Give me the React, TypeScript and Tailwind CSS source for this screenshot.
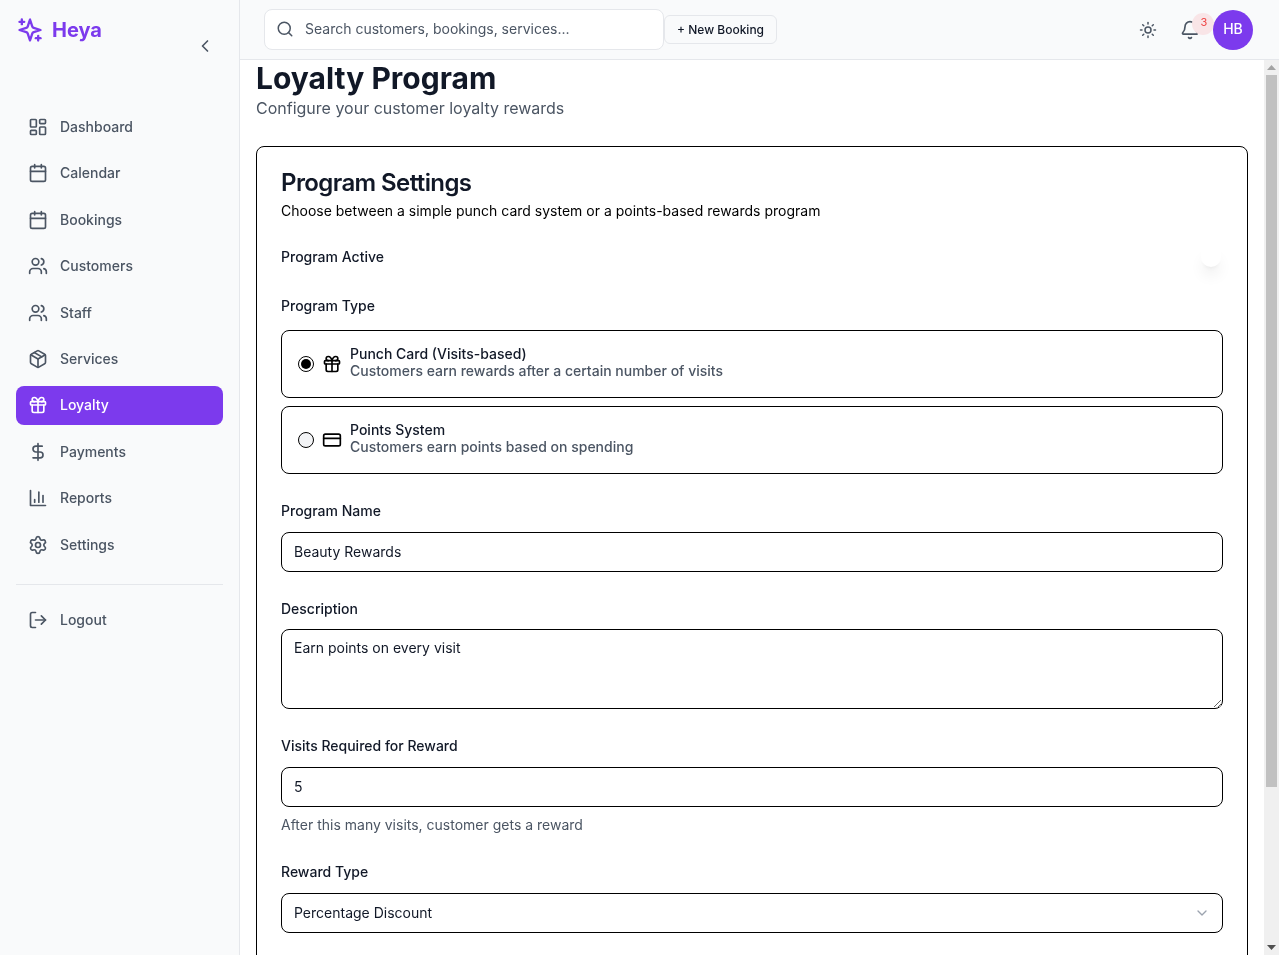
import React from "react";
import { ChevronLeft, LayoutDashboard, Calendar, Users, Package, Gift, DollarSign, Settings, LogOut, Search, Sun, Bell, CreditCard, ChevronDown } from "lucide-react";

function ReportsIcon({ size = 20, strokeWidth = 2 }: { size?: number; strokeWidth?: number }) {
  return (
    <svg width={size} height={size} viewBox="0 0 24 24" fill="none" stroke="currentColor" strokeWidth={strokeWidth} strokeLinecap="round" strokeLinejoin="round">
      <path d="M3 3v18h18" />
      <path d="M18 17V9" />
      <path d="M13 17V5" />
      <path d="M8 17v-3" />
    </svg>
  );
}

const nav = [
  { label: "Dashboard", icon: LayoutDashboard },
  { label: "Calendar", icon: Calendar },
  { label: "Bookings", icon: Calendar },
  { label: "Customers", icon: Users },
  { label: "Staff", icon: Users },
  { label: "Services", icon: Package },
  { label: "Loyalty", icon: Gift, active: true },
  { label: "Payments", icon: DollarSign },
  { label: "Reports", icon: ReportsIcon },
  { label: "Settings", icon: Settings },
];

function LogoMark() {
  return (
    <svg width="28" height="28" viewBox="0 0 24 24" fill="none" stroke="currentColor" strokeWidth="2" strokeLinecap="round" strokeLinejoin="round" className="shrink-0">
      <path d="m12 3-1.912 5.813a2 2 0 0 1-1.275 1.275L3 12l5.813 1.912a2 2 0 0 1 1.275 1.275L12 21l1.912-5.813a2 2 0 0 1 1.275-1.275L21 12l-5.813-1.912a2 2 0 0 1-1.275-1.275L12 3Z" />
      <path d="M5 3v4" />
      <path d="M19 17v4" />
      <path d="M3 5h4" />
      <path d="M17 19h4" />
    </svg>
  );
}

function NavItem({ label, icon: Icon, active }: { label: string; icon: React.ElementType; active?: boolean }) {
  return (
    <a className={`flex items-center gap-3 h-[38.4px] px-[12px] rounded-lg text-sm font-medium ${active ? "bg-[#7c3aed] text-white" : "text-[#4b5563]"}`}>
      <span className="w-5 h-5 flex items-center justify-center shrink-0">
        <Icon size={20} strokeWidth={2} />
      </span>
      <span>{label}</span>
    </a>
  );
}

function Label({ children }: { children: React.ReactNode }) {
  return <label className="block text-sm font-medium text-[#111827] leading-[22.4px]">{children}</label>;
}

function Field({ value }: { value: string }) {
  return (
    <input
      readOnly
      value={value}
      className="block w-full h-10 px-[12px] rounded-lg border border-black bg-white text-sm text-[#111827] outline-none"
    />
  );
}

function RadioCard({ checked, icon: Icon, title, desc }: { checked?: boolean; icon: React.ElementType; title: string; desc: string }) {
  return (
    <div className="flex items-center h-[68px] rounded-lg border border-black px-4 gap-2">
      <span className={`w-4 h-4 rounded-full border border-black flex items-center justify-center shrink-0 ${checked ? "bg-white" : "bg-[#f3f4f6]"}`}>
        {checked && <span className="w-[10px] h-[10px] rounded-full bg-black" />}
      </span>
      <Icon size={20} strokeWidth={2} className="text-black shrink-0" />
      <div className="mb-1 font-medium">
        <div className="text-sm text-[#111827] leading-[17px]">{title}</div>
        <div className="text-sm text-[#4b5563] leading-[17px]">{desc}</div>
      </div>
    </div>
  );
}

function FakeScrollbar() {
  return (
    <div className="w-[15px] shrink-0 h-full bg-[#f0f0f0] flex flex-col items-center">
      <div className="h-[15px] w-full shrink-0 flex items-center justify-center">
        <svg width="9" height="5" viewBox="0 0 9 5"><path d="M4.5 0 9 5H0Z" fill="#a3a3a3" /></svg>
      </div>
      <div className="w-[11px] h-[712px] bg-[#c1c1c1] shrink-0" />
      <div className="mt-auto h-[15px] w-full shrink-0 flex items-center justify-center">
        <svg width="9" height="5" viewBox="0 0 9 5"><path d="M0 0H9L4.5 5Z" fill="#505050" /></svg>
      </div>
    </div>
  );
}

export default function App() {
  return (
    <div className="flex h-screen w-full overflow-hidden leading-[1.6] will-change-transform" style={{ fontFamily: "Inter, sans-serif" }}>
      <aside className="w-[240px] shrink-0 h-full bg-[#f9fafb] border-r border-[#e5e7eb] flex flex-col px-4">
        <div className="h-[60px] relative flex items-start pt-[16px]">
          <div className="flex items-center gap-2 text-[#7c3aed]">
            <LogoMark />
            <span className="text-xl font-bold leading-[28px]">Heya</span>
          </div>
          <ChevronLeft size={20} className="absolute left-[179px] top-[36px] text-[#4b5563]" />
        </div>
        <nav className="flex flex-col gap-2 mt-[47.8px]">
          {nav.map((n) => (
            <NavItem key={n.label} {...n} />
          ))}
        </nav>
        <div className="h-px bg-[#e5e7eb] mt-[20.2px] mb-[16px]" />
        <NavItem label="Logout" icon={LogOut} />
      </aside>
      <div className="flex-1 min-w-0 flex flex-col h-full">
        <header className="h-[60px] shrink-0 bg-[#f9fafb] border-b border-[#e5e7eb] flex items-center pl-6 pr-[26px]">
          <div className="w-[400px] h-[41px] rounded-lg border border-[#e5e7eb] bg-white flex items-center gap-[11px] pl-[11px] pr-3">
            <Search size={18} className="text-[#4b5563] mb-px" />
            <span className="text-sm text-[#4b5563] mb-[2px]">Search customers, bookings, services...</span>
          </div>
          <button className="h-[29px] px-3 rounded-md border border-[#e5e7eb] bg-[#f9fafb] text-xs font-medium text-[#111827]">+ New Booking</button>
          <div className="ml-auto flex items-center">
            <Sun size={18} className="text-[#4b5563] mr-[23px]" />
            <div className="relative mr-[13px]">
              <Bell size={20} className="text-[#4b5563]" />
              <span className="absolute left-[12px] top-[-7px] w-[22px] h-[22px] rounded-full bg-[#f9e5e7] text-[#ef4444] text-[11px] pb-[2px] pl-[2px] flex items-center justify-center">3</span>
            </div>
            <div className="relative w-10 h-10 rounded-full bg-[#7c3aed] text-white text-sm font-medium pb-[2px] flex items-center justify-center">HB</div>
          </div>
        </header>
        <div className="flex-1 min-h-0 flex">
          <main className="flex-1 min-w-0 overflow-hidden px-4">
            <h1 className="text-[30px] font-bold text-[#111827] leading-[36px]">Loyalty Program</h1>
            <p className="text-base text-[#4b5563] leading-[24px]">Configure your customer loyalty rewards</p>
            <section className="mt-[26px] rounded-lg border border-black pt-6 px-6 pb-[140px]">
              <h2 className="text-2xl font-semibold tracking-tight text-[#111827] leading-[24px]">Program Settings</h2>
              <p className="text-sm text-black mt-[5px] leading-[22px]">Choose between a simple punch card system or a points-based rewards program</p>
              <div className="relative mt-[23px] h-[24px] flex items-center">
                <Label>Program Active</Label>
                <span className="absolute right-[2px] top-[2px] w-5 h-5 rounded-full bg-white shadow-lg" />
              </div>
              <div className="mt-[26px]"><Label>Program Type</Label></div>
              <div className="mt-[13px] flex flex-col gap-2">
                <RadioCard checked icon={Gift} title="Punch Card (Visits-based)" desc="Customers earn rewards after a certain number of visits" />
                <RadioCard icon={CreditCard} title="Points System" desc="Customers earn points based on spending" />
              </div>
              <div className="mt-[26px]"><Label>Program Name</Label></div>
              <div className="mt-[9px]"><Field value="Beauty Rewards" /></div>
              <div className="mt-[26px]"><Label>Description</Label></div>
              <div className="mt-[9px]">
                <textarea readOnly value="Earn points on every visit" className="block w-full h-20 px-3 py-2 rounded-lg border border-black bg-white text-sm text-[#111827] outline-none" />
              </div>
              <div className="mt-[26px]"><Label>Visits Required for Reward</Label></div>
              <div className="mt-[9px]"><Field value="5" /></div>
              <p className="mt-[7px] text-sm text-[#4b5563] leading-[22.4px]">After this many visits, customer gets a reward</p>
              <div className="mt-[25px]"><Label>Reward Type</Label></div>
              <div className="mt-[10px] h-10 px-3 rounded-lg border border-black bg-white text-sm text-[#111827] flex items-center justify-between">
                <span>Percentage Discount</span>
                <ChevronDown size={16} className="text-[#9ca3af]" />
              </div>
            </section>
          </main>
          <FakeScrollbar />
        </div>
      </div>
    </div>
  );
}
